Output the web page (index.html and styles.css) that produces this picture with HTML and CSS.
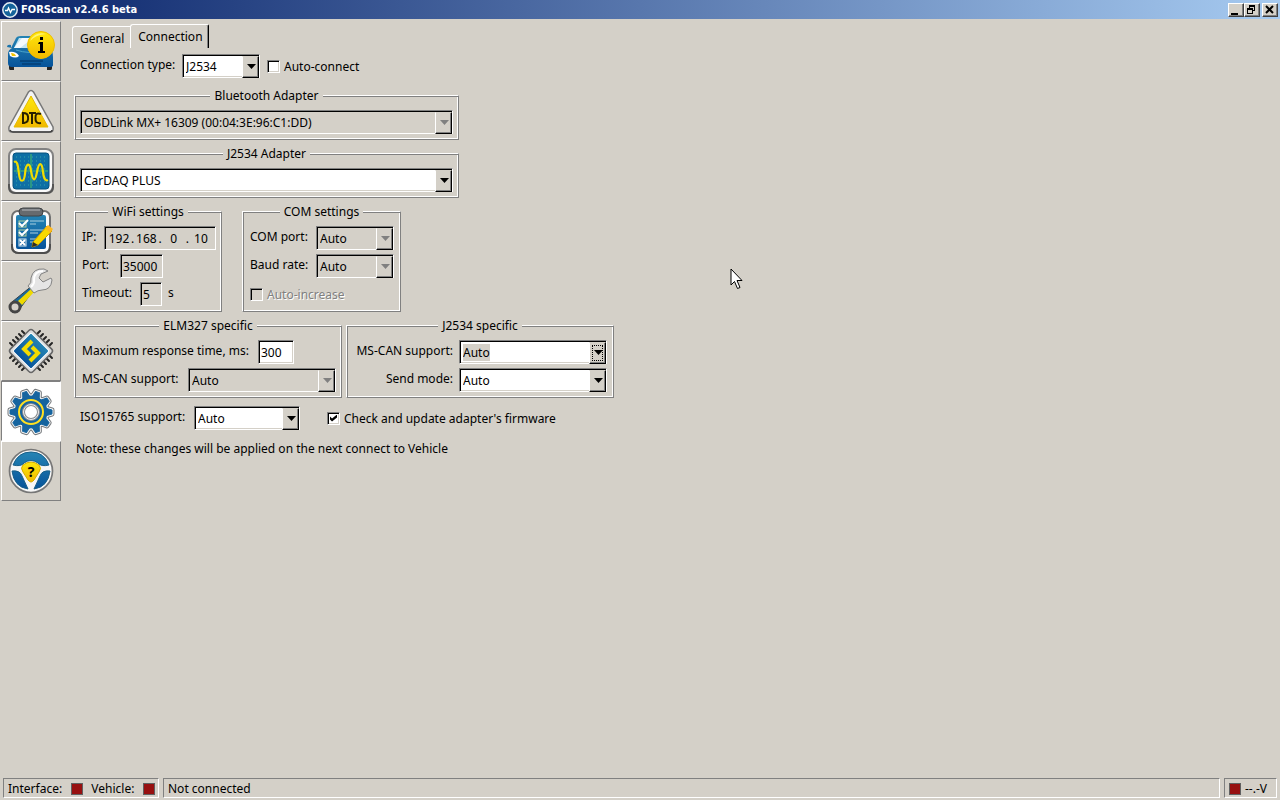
FILE: index.html
```html
<!DOCTYPE html>
<html lang="en">
<head>
    <meta charset="UTF-8">
    <meta name="viewport" content="width=device-width, initial-scale=1.0">
    <title>FORScan v2.4.6 beta</title>
    <link rel="stylesheet" href="styles.css">
</head>
<body>
    <header class="titlebar">
        <svg class="app-icon" width="16" height="16" viewBox="0 0 16 16">
            <circle cx="8" cy="8" r="7.2" fill="#14639b" stroke="#e4eef5" stroke-width="1.5"/>
            <path d="M3 8.500H5.500L6.500 6L8.500 10.500L10 7.500H13" fill="none" stroke="#fff" stroke-width="1.3"/>
        </svg>
        <h1>FORScan v2.4.6 beta</h1>
        <div class="window-buttons">
            <button type="button" aria-label="Minimize"><svg width="14" height="12" viewBox="0 0 14 12"><path d="M2 9H9V11H2Z"/></svg></button>
            <button type="button" aria-label="Restore"><svg width="14" height="12" viewBox="0 0 14 12" shape-rendering="crispEdges"><path d="M4 1H10V7H8V6H9V3H5V4H4ZM2 4H8V10H2ZM3 6V9H7V6Z" fill-rule="evenodd"/></svg></button>
            <button type="button" class="close" aria-label="Close"><svg width="14" height="12" viewBox="0 0 14 12"><path d="M3 2L10 9M10 2L3 9" stroke="#000" stroke-width="2"/></svg></button>
        </div>
    </header>

    <div class="workspace">
        <nav class="sidebar" aria-label="Sections">
            <button type="button" aria-label="Vehicle">
                <svg viewBox="0 0 54 54">
                    <defs>
                        <linearGradient id="blue" x1="0" y1="0" x2="0" y2="1"><stop offset="0" stop-color="#2584b4"/><stop offset="1" stop-color="#06539a"/></linearGradient>
                        <linearGradient id="gold" x1="0" y1="0" x2="0" y2="1"><stop offset="0" stop-color="#ffe80c"/><stop offset="1" stop-color="#f1b900"/></linearGradient>
                    </defs>
                    <path d="M5 38H10V46H6Q5 46 5 44ZM43 38H48V44Q48 46 47 46H43Z" fill="#252525"/>
                    <path d="M7 24L12 14Q13 12 17 12H38L46 24Q49 27 49 33V41Q49 43 46 43H8Q4 43 4 39V30Q4 26 8 24L3 23Q3 20 7 21Z" fill="url(#blue)"/>
                    <path d="M15 14H33V24H10Z" fill="#c4e5f3"/>
                    <path d="M18 14H29L16 24H10Z" fill="#f3faff"/>
                    <path d="M5 28Q12 27 15 32Q12 35 6 32Z" fill="#fff"/>
                    <path d="M7 29Q11 29 12 32L8 32Z" fill="#f0c400"/>
                    <path d="M16 37H39M18 40H37" stroke="#043f76" stroke-width="1.5"/>
                    <path d="M12 26Q24 30 40 28" fill="none" stroke="#4aa3cc"/>
                    <circle cx="37" cy="21" r="13.5" fill="url(#gold)" stroke="#efbd00"/>
                    <path d="M26 17Q31 7 42 10Q31 11 26 17Z" fill="#fff375"/>
                    <path d="M36 13H39V16H36ZM35 18H39V27H41V29H34V27H36V20H34Z"/>
                </svg>
            </button>
            <button type="button" aria-label="DTC">
                <svg viewBox="0 0 54 54">
                    <path d="M24.5 8Q27 5 29.500 8L49 43Q50 48 46 48H8Q4 48 5 43Z" fill="#f4f4f4" stroke="#777" stroke-width="1.500"/>
                    <path d="M6 46Q7 48 9 48H45Q48 48 48 46" fill="none" stroke="#444" stroke-width="1.500"/>
                    <path d="M27 12L44 43H10Z" fill="url(#gold)" stroke="#e5ba00"/>
                    <g fill="none" stroke="#272000" stroke-width="2">
                        <path d="M19 29V39H20Q25 38 24 33Q24 29 19 29ZM25 29H32M28 29V40M37 30Q31 28 31.500 34Q31 40 37 39"/>
                    </g>
                </svg>
            </button>
            <button type="button" aria-label="Oscilloscope">
                <svg viewBox="0 0 54 54">
                    <rect x="5" y="5" width="44" height="44" rx="7" fill="#fafafa" stroke="#828282" stroke-width="2"/>
                    <path d="M5 40V43Q5 49 11 49H43Q49 49 49 43V40" fill="none" stroke="#555" stroke-width="2"/>
                    <rect x="9" y="9" width="36" height="36" rx="3" fill="#0e6fa5" stroke="#07527f"/>
                    <path d="M12 13H44M12 17H44M12 21H44M12 25H44M12 29H44M12 33H44M12 37H44M12 41H44" stroke="#35a6a5" stroke-dasharray="1 3"/>
                    <path d="M27 10V44M10 27H44" stroke="#299785" stroke-width="2"/>
                    <path d="M10 18C14 16 14 24 15 30C16 39 20 39 21 30C22 18 26 18 27 27C29 38 31 38 33 28C35 17 38 18 39 28C40 36 42 37 44 36" fill="none" stroke="#f1dc00" stroke-width="2.2"/>
                </svg>
            </button>
            <button type="button" aria-label="Tests">
                <svg viewBox="0 0 54 54">
                    <rect x="8" y="7" width="38" height="42" rx="6" fill="#fafafa" stroke="#717171" stroke-width="2"/>
                    <path d="M8 40V42Q8 49 15 49H40Q46 49 46 42V40" fill="none" stroke="#4d4d4d" stroke-width="2"/>
                    <rect x="12" y="11" width="30" height="34" rx="2" fill="url(#blue)"/>
                    <rect x="15" y="4" width="24" height="8" rx="4" fill="#666a6e" stroke="#3f4245"/>
                    <path d="M18 6H36" stroke="#9c9fa3" stroke-width="1.5"/>
                    <g fill="none" stroke="#b5d29b"><rect x="15" y="17" width="7" height="6"/><rect x="15" y="26" width="7" height="6"/></g>
                    <rect x="15" y="35" width="7" height="7" fill="none" stroke="#dae9f0"/>
                    <path d="M15 19L18 22L24 16M15 28L18 31L24 25M16 36L21 41M21 36L16 41" fill="none" stroke="#fff" stroke-width="2"/>
                    <path d="M26 17H40M26 20H32M26 26H40M26 29H34M26 35H34M26 38H30" stroke="#a9cfdf"/>
                    <path d="M29 38L43 22L48 27L34 41L28 43Z" fill="#f7d900" stroke="#c89c00"/>
                    <path d="M41 24L44 21L49 25L46 29Z" fill="#ffb91f"/><path d="M29 38L34 41L28 43Z" fill="#2b2b2b"/>
                </svg>
            </button>
            <button type="button" aria-label="Service">
                <svg viewBox="0 0 54 54">
                    <path d="M31 24L15 46Q10 51 6 46Q4 42 8 38L29 21Z" fill="#18699d" stroke="#37424a"/>
                    <path d="M27 25L30 28L18 41L14 37Z" fill="#eed900"/>
                    <circle cx="11" cy="43" r="5" fill="#d5d1ca" stroke="#454545" stroke-width="3"/>
                    <path d="M40 5Q29 4 27 14Q28 19 24 22L30 29Q34 26 38 26Q47 26 48 16L47 14L39 18L35 14L37 10L44 7Z" fill="#e5e5e5" stroke="#838383"/>
                    <path d="M39 7Q30 7 30 16Q31 19 27 23" fill="none" stroke="#fff" stroke-width="2"/>
                </svg>
            </button>
            <button type="button" aria-label="Modules">
                <svg viewBox="0 0 54 54">
                    <g stroke="#252525" stroke-width="2" stroke-linecap="round">
                        <path d="M15 10L18 13M12 13L15 16M9 16L12 19M6 19L9 22M18 7L21 10M36 7L33 10M39 10L36 13M42 13L39 16M45 16L42 19M48 19L45 22M6 34L9 31M9 37L12 34M12 40L15 37M15 43L18 40M18 46L21 43M48 34L45 31M45 37L42 34M42 40L39 37M39 43L36 40M36 46L33 43"/>
                    </g>
                    <rect x="11" y="11" width="32" height="32" rx="3" transform="rotate(45 27 27)" fill="#ddd" stroke="#666" stroke-width="1.5"/>
                    <rect x="14" y="14" width="26" height="26" rx="2" transform="rotate(45 27 27)" fill="url(#blue)" stroke="#fff"/>
                    <path d="M28 17L20 25L26 31M28 23L34 29L26 37" fill="none" stroke="#f3dc00" stroke-width="4"/>
                </svg>
            </button>
            <button type="button" class="active" aria-label="Settings" aria-current="page">
                <svg viewBox="0 0 54 54">
                    <defs>
                        <path id="tooth" d="M23 14L25 7H29L31 14Z"/>
                        <g id="gear" stroke-linejoin="round">
                            <circle cx="27" cy="28" r="16"/>
                            <use href="#tooth" transform="rotate(18 27 28)"/>
                            <use href="#tooth" transform="rotate(54 27 28)"/>
                            <use href="#tooth" transform="rotate(90 27 28)"/>
                            <use href="#tooth" transform="rotate(126 27 28)"/>
                            <use href="#tooth" transform="rotate(162 27 28)"/>
                            <use href="#tooth" transform="rotate(198 27 28)"/>
                            <use href="#tooth" transform="rotate(234 27 28)"/>
                            <use href="#tooth" transform="rotate(270 27 28)"/>
                            <use href="#tooth" transform="rotate(306 27 28)"/>
                            <use href="#tooth" transform="rotate(342 27 28)"/>
                        </g>
                    </defs>
                    <use href="#gear" fill="#777b7e" stroke="#777b7e" stroke-width="5"/>
                    <use href="#gear" fill="#f4f4f4" stroke="#f4f4f4" stroke-width="3"/>
                    <use href="#gear" fill="#15649f" stroke="#15649f"/>
                    <circle cx="27" cy="28" r="12" fill="none" stroke="#ffe020" stroke-width="2"/>
                    <circle cx="27" cy="28" r="7.5" fill="#fff" stroke="#8a8d8f" stroke-width="3"/>
                    <circle cx="27" cy="28" r="7.5" fill="none" stroke="#eee"/>
                </svg>
            </button>
            <button type="button" aria-label="Help">
                <svg viewBox="0 0 54 54">
                    <circle cx="27" cy="27" r="21.5" fill="#f7f7f7" stroke="#777" stroke-width="1.7"/>
                    <path d="M9 21Q14 8 27 8Q40 8 45 21Q37 23 34 19Q27 14 20 19Q17 23 9 21ZM8 27Q16 26 18 32L24 45Q10 43 8 27ZM46 27Q38 26 36 32L30 45Q44 43 46 27Z" fill="url(#blue)" stroke="#18608a"/>
                    <path d="M19 21Q27 15 35 21Q38 24 35 28L30 36Q27 40 24 36L19 28Q16 24 19 21Z" fill="url(#gold)" stroke="#d5ad00"/>
                    <text x="27" y="33" class="wheel-mark">?</text>
                </svg>
            </button>
        </nav>

        <main class="content">
            <div class="tabs" role="tablist">
                <button type="button" class="tab" role="tab" aria-selected="false">General</button>
                <button type="button" class="tab selected" role="tab" aria-selected="true">Connection</button>
            </div>

            <form class="settings">
                <div class="row outer">
                    <label for="conn-type">Connection type:</label>
                    <span class="combo type-combo"><select id="conn-type"><option>J2534</option></select></span>
                    <input type="checkbox" id="auto-connect">
                    <label for="auto-connect" class="check-label">Auto-connect</label>
                </div>

                <fieldset class="adapter">
                    <legend>Bluetooth Adapter</legend>
                    <span class="combo disabled"><select disabled aria-label="Bluetooth Adapter"><option>OBDLink MX+ 16309 (00:04:3E:96:C1:DD)</option></select></span>
                </fieldset>
                <fieldset class="adapter">
                    <legend>J2534 Adapter</legend>
                    <span class="combo"><select aria-label="J2534 Adapter"><option>CarDAQ PLUS</option></select></span>
                </fieldset>

                <div class="groups network">
                    <fieldset class="wifi">
                        <legend>WiFi settings</legend>
                        <div class="row">
                            <label for="ip">IP:</label>
                            <div class="ip"><input type="text" id="ip" value="192" disabled>.<input type="text" aria-label="IP, part 2" value="168" disabled>.<input type="text" aria-label="IP, part 3" value="0" disabled>.<input type="text" aria-label="IP, part 4" value="10" disabled></div>
                        </div>
                        <div class="row"><label for="port" class="port-label">Port:</label><input type="text" id="port" class="port" value="35000" disabled></div>
                        <div class="row"><label for="timeout" class="timeout-label">Timeout:</label><input type="text" id="timeout" class="timeout" value="5" disabled><span class="unit">s</span></div>
                    </fieldset>
                    <fieldset class="com">
                        <legend>COM settings</legend>
                        <div class="row spread"><label for="com-port">COM port:</label><span class="combo disabled short-combo"><select id="com-port" disabled><option>Auto</option></select></span></div>
                        <div class="row spread"><label for="baud">Baud rate:</label><span class="combo disabled short-combo"><select id="baud" disabled><option>Auto</option></select></span></div>
                        <div class="row"><input type="checkbox" id="auto-inc" disabled><label for="auto-inc" class="check-label">Auto-increase</label></div>
                    </fieldset>
                </div>

                <div class="groups">
                    <fieldset class="specific">
                        <legend>ELM327 specific</legend>
                        <div class="row"><label for="max-time" class="time-label">Maximum response time, ms:</label><input type="text" id="max-time" class="max-time" value="300"></div>
                        <div class="row spread"><label for="elm-can">MS-CAN support:</label><span class="combo disabled mode-combo"><select id="elm-can" disabled><option>Auto</option></select></span></div>
                    </fieldset>
                    <fieldset class="specific right-labels">
                        <legend>J2534 specific</legend>
                        <div class="row"><label for="j-can">MS-CAN support:</label><span class="combo focused mode-combo"><select id="j-can"><option>Auto</option></select></span></div>
                        <div class="row"><label for="send-mode">Send mode:</label><span class="combo mode-combo"><select id="send-mode"><option>Auto</option></select></span></div>
                    </fieldset>
                </div>

                <div class="row outer last">
                    <label for="iso" class="iso-label">ISO15765 support:</label>
                    <span class="combo iso-combo"><select id="iso"><option>Auto</option></select></span>
                    <input type="checkbox" id="firmware" class="firmware" checked>
                    <label for="firmware" class="check-label">Check and update adapter's firmware</label>
                </div>
                <p class="note">Note: these changes will be applied on the next connect to Vehicle</p>
            </form>
        </main>
    </div>

    <footer class="statusbar">
        <div class="pane links"><span>Interface:</span><i class="led"></i><span>Vehicle:</span><i class="led"></i></div>
        <div class="pane message">Not connected</div>
        <div class="pane volts"><i class="led"></i><span>--.-V</span></div>
    </footer>

    <svg class="pointer" width="13" height="22" viewBox="0 0 13 22"><path d="M1 1V17L4.500 13.500L7.500 20.500L10 19.500L7 12.500H12Z" fill="#fff" stroke="#000"/></svg>
</body>
</html>
```
FILE: styles.css
```css
* { box-sizing: border-box; }
body { margin: 0; min-height: 100vh; display: flex; flex-direction: column; background: #d4d0c8; color: #000; font-family: Tahoma, "Noto Sans", sans-serif; font-size: 12px; line-height: 16px; }
button, input, select { font: inherit; color: inherit; margin: 0; border-radius: 0; }

/* title bar */
.titlebar { display: flex; align-items: center; height: 19px; padding: 0 2px; gap: 3px; background: linear-gradient(to right, #0a246a, #a6caf0); }
.titlebar h1 { margin: 0; flex: 1; color: #fff; font-family: Tahoma, "DejaVu Sans Condensed", sans-serif; font-size: 11px; line-height: 16px; font-weight: bold; }
.window-buttons { display: flex; }
.window-buttons button { width: 16px; height: 14px; padding: 0; display: flex; background: #d4d0c8; border: 1px solid; border-color: #fff #404040 #404040 #fff; box-shadow: inset -1px -1px #808080; }
.window-buttons .close { margin-left: 2px; }

/* sidebar */
.workspace { flex: 1; display: flex; align-items: flex-start; }
.sidebar { display: flex; flex-direction: column; width: 62px; padding: 2px 1px 0; }
.sidebar button { height: 60px; padding: 2px; background: #d4d0c8; border: 1px solid; border-color: #fff #808080 #808080 #fff; }
.sidebar .active { background: #fff; border-color: #808080 #fff #fff #808080; }
.sidebar svg { display: block; width: 54px; height: 54px; }
.wheel-mark { font-size: 14px; font-weight: bold; text-anchor: middle; }

/* tabs */
.content { flex: 1; padding: 5px 12px 0 10px; }
.tabs { display: flex; align-items: flex-end; height: 24px; }
.tab { height: 22px; padding: 2px 6px 0 7px; background: none; border: 1px solid; border-color: #fff transparent transparent #fff; border-top-left-radius: 3px; border-right: 0; border-bottom: 0; }
.tab.selected { height: 24px; padding: 0 5px 0 7px; border-right: 1px solid #000; border-top-right-radius: 2px; box-shadow: inset -1px 0 #808080; }

/* form */
.settings { display: flex; flex-direction: column; align-items: flex-start; gap: 5px; padding: 6px 0 0 2px; }
.row { display: flex; align-items: center; height: 24px; padding-left: 2px; }
.row + .row { margin-top: 4px; }
.row label { padding-bottom: 2px; white-space: nowrap; }
.row .check-label { padding: 1px 0 0 4px; }
.row.outer { padding-left: 6px; }
.spread { justify-content: space-between; }
.settings > .outer:first-child { margin-bottom: 4px; }

fieldset { min-width: 0; margin: 0; padding: 7px 5px 5px; border: 1px solid; border-color: #fff #808080 #808080 #fff; box-shadow: inset 1px 1px #808080, inset -1px -1px #fff; }
legend { height: 16px; margin: 0 auto; padding: 1px 4px 0; background: #d4d0c8; }
.groups { display: flex; gap: 4px; }
.groups.network { gap: 20px; }
.adapter { width: 385px; }
.wifi { width: 148px; }
.com { width: 159px; }
.specific { width: 268px; }

.combo { position: relative; display: block; flex: none; height: 24px; }
.combo select, input[type="text"], .ip { display: block; width: 100%; height: 24px; padding: 1px 2px 0; background: #fff; border: 1px solid; border-color: #808080 #fff #fff #808080; box-shadow: inset 1px 1px #000, inset -1px -1px #d4d0c8; outline: none; }
.combo select { appearance: none; padding: 1px 20px 0 3px; }
.combo select:disabled, input[type="text"]:disabled { background: #d4d0c8; color: #000; opacity: 1; }
/* drop-down button and its arrow */
.combo::before { content: ""; position: absolute; top: 2px; right: 1px; width: 15px; height: 20px; background: #d4d0c8; border: 1px solid; border-color: #d4d0c8 #000 #000 #fff; box-shadow: inset -1px -1px #808080; pointer-events: none; }
.combo::after { content: ""; position: absolute; top: 10px; right: 4px; width: 9px; height: 5px; background: #000; clip-path: polygon(0 0, 100% 0, 50% 100%); pointer-events: none; }
.combo.disabled::after { background: #808080; }
.combo.focused::before { outline: 1px dotted #000; outline-offset: -4px; }
.combo.focused select { background: linear-gradient(#d4d0c8, #d4d0c8) 3px 3px / 27px 17px no-repeat #fff; }

.type-combo { width: 78px; margin-right: 7px; }
.settings > .outer:first-child label:first-child { min-width: 102px; }
.short-combo { width: 78px; }
.com .row { padding-right: 1px; }
.iso-combo { width: 106px; }
.row .iso-label { min-width: 114px; }
.firmware { margin-left: 27px; }
.specific .mode-combo { width: 148px; }
.right-labels .row { justify-content: flex-end; gap: 6px; padding-right: 1px; }
.row .ip { display: flex; align-items: center; flex: none; width: 112px; margin-left: auto; background: #d4d0c8; }
.ip input[type="text"] { flex: 1; min-width: 0; height: 20px; padding: 0; border: 0; box-shadow: none; text-align: center; }
.port, .timeout, .max-time { flex: none; }
.row .port-label { min-width: 38px; }
.row .port { width: 43px; }
.row .timeout-label { min-width: 58px; }
.row .timeout { width: 22px; }
.unit { padding: 0 0 2px 6px; }
.row .time-label { min-width: 176px; }
.row .max-time { width: 36px; }

input[type="checkbox"] { appearance: none; flex: none; width: 13px; height: 13px; background: #fff; border: 1px solid; border-color: #808080 #fff #fff #808080; box-shadow: inset 1px 1px #000, inset -1px -1px #d4d0c8; }
input[type="checkbox"]:checked::before { content: ""; display: block; width: 7px; height: 7px; margin: 2px; background: #000; clip-path: polygon(0 29%, 29% 58%, 100% 0, 100% 42%, 29% 100%, 0 71%); }
input[type="checkbox"]:disabled { background: #d4d0c8; }
input:disabled + .check-label { color: #808080; text-shadow: 1px 1px #fff; }
.last { margin-top: 3px; }
.note { margin: 6px 0 0 2px; }

/* status bar */
.statusbar { display: flex; gap: 4px; padding: 0 3px 2px; }
.pane { display: flex; align-items: center; height: 20px; padding: 1px 4px 0; border: 1px solid; border-color: #808080 #fff #fff #808080; white-space: nowrap; }
.links { width: 156px; justify-content: space-between; padding-right: 3px; }
.message { flex: 1; }
.volts { gap: 4px; width: 53px; }
.led { width: 12px; height: 12px; background: #971010; border: 1px solid #606060; }

.pointer { position: absolute; left: 730px; top: 268px; pointer-events: none; }
```
